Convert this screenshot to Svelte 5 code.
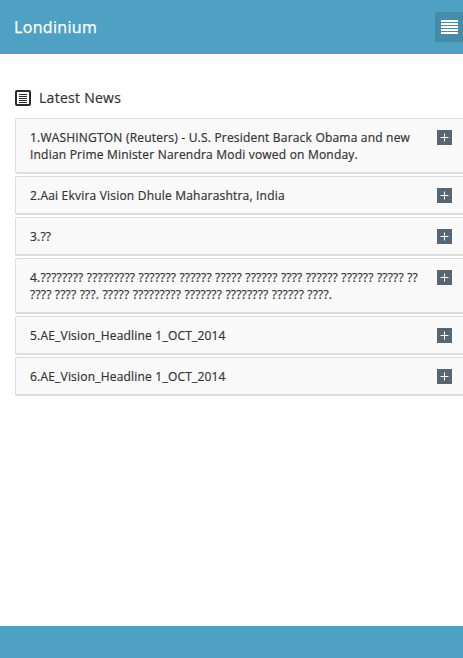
<script>
  const news = [
    '1.WASHINGTON (Reuters) - U.S. President Barack Obama and new Indian Prime Minister Narendra Modi vowed on Monday.',
    '2.Aai Ekvira Vision Dhule Maharashtra, India',
    '3.??',
    '4.???????? ????????? ??????? ?????? ????? ?????? ???? ?????? ?????? ????? ?? ???? ???? ???. ????? ????????? ??????? ???????? ?????? ????.',
    '5.AE_Vision_Headline 1_OCT_2014',
    '6.AE_Vision_Headline 1_OCT_2014'
  ];
</script>

<div class="page">
  <header class="navbar">
    <span class="brand">Londinium</span>
    <button class="nav-toggle" aria-label="Menu">
      <span></span><span></span><span></span><span></span><span></span>
    </button>
  </header>

  <main class="content">
    <h6 class="heading">
      <svg class="heading-icon" width="16" height="16" viewBox="0 0 16 16">
        <rect x="1" y="1" width="14" height="14" rx="1" fill="none" stroke="#2b2b2b" stroke-width="2"/>
        <path d="M4 4.5h8M4 6.5h8M4 8.5h8M4 10.5h8M4 12.5h8" stroke="#2b2b2b" stroke-width="1"/>
      </svg>
      Latest News
    </h6>

    <div class="panels">
      {#each news as item}
        <div class="panel">
          <span class="title">{item}</span>
          <span class="plus">
            <svg width="15" height="15" viewBox="0 0 15 15">
              <path d="M3.5 7.5h8M7.5 3.5v8" stroke="#fff" stroke-width="1"/>
            </svg>
          </span>
        </div>
      {/each}
    </div>
  </main>

  <footer class="footer"></footer>
</div>

<style>
  :global(body) {
    margin: 0;
    background: #fff;
  }
  .page {
    display: flex;
    flex-direction: column;
    height: 658px;
    overflow: hidden;
    font-family: "Open Sans", sans-serif;
    color: #333;
  }
  .navbar {
    display: flex;
    justify-content: space-between;
    align-items: flex-start;
    height: 54px;
    flex: none;
    background: #4fa1c3;
  }
  .brand {
    color: #fff;
    font-size: 16px;
    font-weight: 400;
    letter-spacing: 0.33px;
    -webkit-text-stroke: 0.25px #fff;
    line-height: 54px;
    padding-left: 14px;
  }
  .nav-toggle {
    display: flex;
    flex-direction: column;
    gap: 1px;
    align-items: center;
    justify-content: center;
    width: 28px;
    height: 30px;
    margin-top: 12px;
    padding: 0;
    border: 0;
    background: #458cab;
  }
  .nav-toggle span {
    display: block;
    width: 17px;
    height: 2px;
    background: #fff;
  }
  .content {
    flex: 1;
    padding: 36px 0 0 15px;
  }
  .heading {
    display: flex;
    align-items: center;
    gap: 8px;
    margin: 0 0 12px;
    font-size: 14px;
    font-weight: 400;
    letter-spacing: 0.27px;
    -webkit-text-stroke: 0.2px #333;
    line-height: 16px;
  }
  .heading-icon {
    flex: none;
  }
  .panels {
    display: flex;
    flex-direction: column;
    gap: 2px;
  }
  .panel {
    display: flex;
    justify-content: space-between;
    align-items: flex-start;
    padding: 10px 11px 9px 14px;
    background: #f9f9f9;
    border: 1px solid #ddd;
    border-right: 0;
    border-bottom-width: 2px;
    border-radius: 2px 0 0 2px;
    font-size: 12px;
    font-weight: 400;
    letter-spacing: 0.2px;
    -webkit-text-stroke: 0.2px #333;
    line-height: 17px;
  }
  .title {
    width: 396px;
  }
  .plus {
    display: block;
    flex: none;
    width: 15px;
    height: 15px;
    margin-top: 1px;
    background: #566773;
  }
  .plus svg {
    display: block;
  }
  .footer {
    height: 32px;
    flex: none;
    background: #4fa1c3;
  }
</style>
